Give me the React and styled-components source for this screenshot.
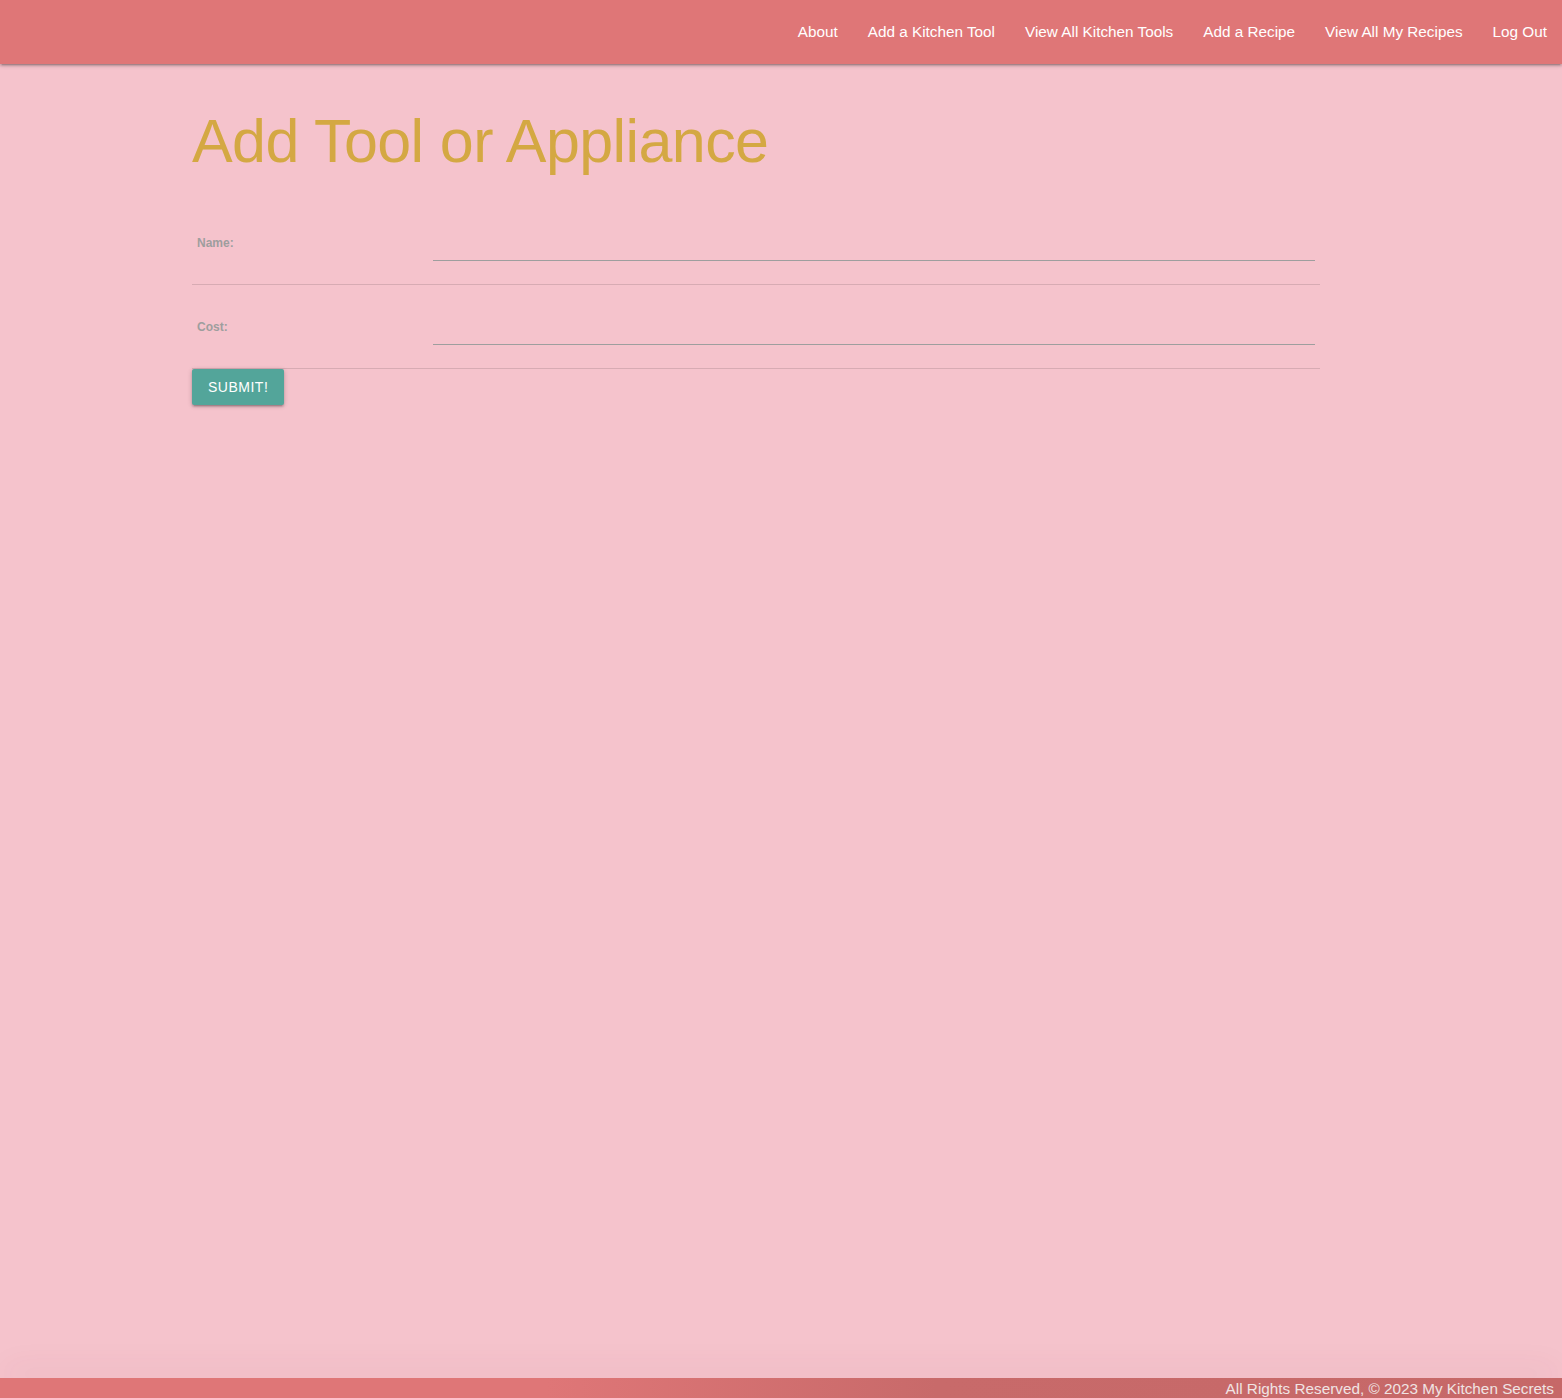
import React from 'react';
import styled, { createGlobalStyle } from 'styled-components';

const Global = createGlobalStyle`
  html, body {
    margin: 0;
    padding: 0;
  }
  body {
    background: #f5c3cc;
    font-family: "Liberation Sans", Arial, sans-serif;
  }
`;

const Page = styled.div`
  min-height: 100vh;
  display: flex;
  flex-direction: column;
`;

const Nav = styled.nav`
  height: 64px;
  background: #df7677;
  box-shadow: 0 2px 2px 0 rgba(0, 0, 0, 0.14), 0 3px 1px -2px rgba(0, 0, 0, 0.12),
    0 1px 5px 0 rgba(0, 0, 0, 0.2);
  display: flex;
  justify-content: flex-end;
  align-items: center;
`;

const NavLink = styled.a`
  color: #fff;
  font-size: 15.3px;
  padding: 0 15px;
  line-height: 66px;
  text-decoration: none;
  cursor: pointer;
`;

const Main = styled.main`
  flex: 1;
  width: 1128px;
  margin-left: 192px;
`;

const Title = styled.h1`
  color: #d4a843;
  font-size: 61px;
  font-weight: 400;
  letter-spacing: -0.6px;
  line-height: 1.1;
  margin: 44px 0 26px;
`;

const Table = styled.table`
  width: 100%;
  border-collapse: collapse;
`;

const Row = styled.tr`
  border-bottom: 1px solid rgba(0, 0, 0, 0.12);
`;

const Cell = styled.td`
  padding: 15px 5px;
  vertical-align: middle;
  width: ${(p) => p.$width || 'auto'};
`;

const Label = styled.label`
  color: #9e9e9e;
  font-size: 12px;
  font-weight: 700;
  display: block;
  margin-top: 0;
`;

const Input = styled.input`
  display: block;
  width: 100%;
  height: 45px;
  box-sizing: border-box;
  margin: 0 0 8px;
  padding: 0;
  border: none;
  border-bottom: 1px solid #9e9e9e;
  background: transparent;
  font-size: 16px;
  outline: none;
`;

const Button = styled.button`
  height: 36px;
  padding: 0 16px;
  border: none;
  border-radius: 2px;
  background: #53a59a;
  color: #fff;
  font-family: inherit;
  font-size: 14px;
  letter-spacing: 0.5px;
  text-transform: uppercase;
  box-shadow: 0 2px 2px 0 rgba(0, 0, 0, 0.14), 0 3px 1px -2px rgba(0, 0, 0, 0.12),
    0 1px 5px 0 rgba(0, 0, 0, 0.2);
  cursor: pointer;
`;

const Footer = styled.footer`
  height: 20px;
  background: linear-gradient(90deg, #df7677 0%, #df7677 35%, #c86a6a 60%, #c66868 100%);
  box-shadow: 0 -14px 30px -6px rgba(120, 60, 70, 0.12);
  color: #f0e4e4;
  font-size: 15.3px;
  line-height: 22px;
  text-align: right;
  padding-right: 8px;
  overflow: hidden;
`;

const links = [
  'About',
  'Add a Kitchen Tool',
  'View All Kitchen Tools',
  'Add a Recipe',
  'View All My Recipes',
  'Log Out',
];

export default function App() {
  return (
    <Page>
      <Global />
      <Nav>
        {links.map((l) => (
          <NavLink key={l}>{l}</NavLink>
        ))}
      </Nav>
      <Main>
        <Title>Add Tool or Appliance</Title>
        <form onSubmit={(e) => e.preventDefault()}>
          <Table>
            <tbody>
              <Row>
                <Cell $width="226px">
                  <Label htmlFor="name">Name:</Label>
                </Cell>
                <Cell>
                  <Input id="name" type="text" />
                </Cell>
              </Row>
              <Row>
                <Cell $width="226px">
                  <Label htmlFor="cost">Cost:</Label>
                </Cell>
                <Cell>
                  <Input id="cost" type="text" />
                </Cell>
              </Row>
            </tbody>
          </Table>
          <Button type="submit">Submit!</Button>
        </form>
      </Main>
      <Footer>All Rights Reserved, © 2023 My Kitchen Secrets</Footer>
    </Page>
  );
}
